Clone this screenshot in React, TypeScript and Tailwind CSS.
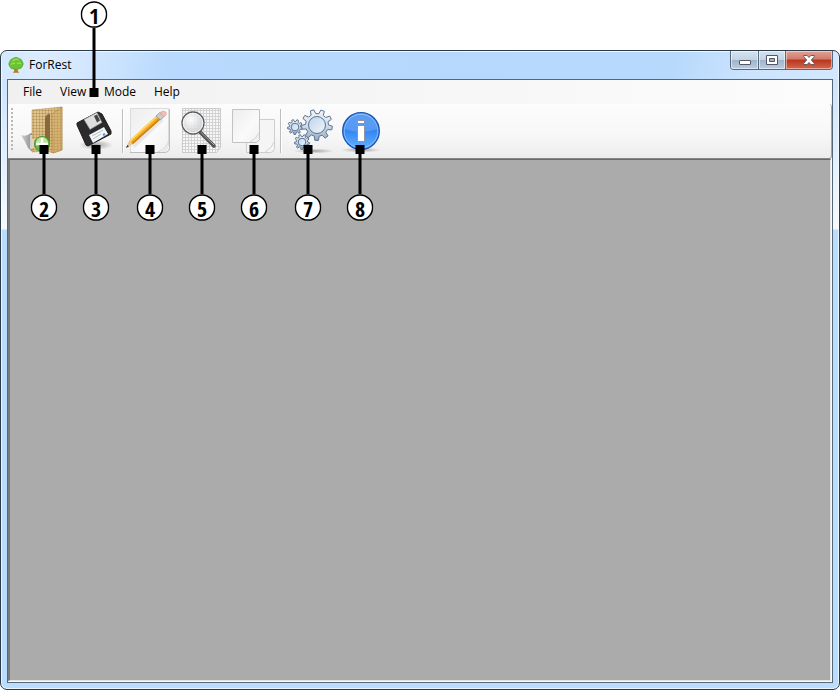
import type { ReactNode } from "react";

function Marker({ n, up = false }: { n: number; up?: boolean }) {
  return (
    <span
      className={
        "pointer-events-none absolute left-1/2 z-10 flex -translate-x-1/2 items-center " +
        (up ? "bottom-[7px] flex-col-reverse" : "top-[41px] flex-col")
      }
    >
      <span className="size-[9px] bg-black" />
      <span className={"w-[3px] bg-black " + (up ? "h-[60px]" : "h-[40px]")} />
      <span className="relative flex size-[27px] items-center justify-center font-['Open_Sans_Condensed','Roboto_Condensed','Liberation_Sans',sans-serif] text-[22px] leading-[22px] font-bold text-black">
        <svg viewBox="0 0 27 27" className="absolute inset-0 size-[27px]" aria-hidden="true">
          <circle cx="13.500" cy="13.500" r="12.600" fill="#fff" stroke="#000" strokeWidth="1.500" />
        </svg>
        <span className="relative">{n}</span>
      </span>
    </span>
  );
}

function Tool({ label, n, children }: { label: string; n: number; children: ReactNode }) {
  return (
    <button type="button" aria-label={label} className="relative h-[52px] w-[52px] shrink-0">
      <svg viewBox="0 0 52 52" className="block size-[52px]" aria-hidden="true">
        {children}
      </svg>
      <Marker n={n} />
    </button>
  );
}

function Separator() {
  return <span className="mt-[5px] h-[44px] w-[2px] shrink-0 border-r border-l border-r-white border-l-[#bdbdbd]" />;
}

function Gear({ x, y, r, teeth, hole }: { x: number; y: number; r: number; teeth: number; hole: number }) {
  const points: string[] = [];
  for (let i = 0; i < teeth; i++) {
    const step = (Math.PI * 2) / teeth;
    const a = i * step + 0.2;
    const parts: [number, number][] = [[-0.3, 0.74], [-0.17, 1], [0.17, 1], [0.3, 0.74]];
    for (const [d, k] of parts) {
      points.push(`${(x + Math.cos(a + d * step) * r * k).toFixed(2)},${(y + Math.sin(a + d * step) * r * k).toFixed(2)}`);
    }
  }
  return (
    <g stroke="#5b7592" strokeLinejoin="round">
      <polygon points={points.join(" ")} fill="url(#gear)" />
      <circle cx={x} cy={y} r={hole} fill="url(#gearHole)" />
    </g>
  );
}

function Defs() {
  return (
    <svg className="absolute size-0" aria-hidden="true">
      <defs>
        <linearGradient id="gear" x1="0" y1="0" x2="0" y2="1">
          <stop offset="0" stopColor="#f2f6fa" />
          <stop offset=".5" stopColor="#d3deea" />
          <stop offset="1" stopColor="#93aac3" />
        </linearGradient>
        <linearGradient id="gearHole" x1="0" y1="0" x2="1" y2="1">
          <stop offset="0" stopColor="#bfd4ea" />
          <stop offset="1" stopColor="#eef5fc" />
        </linearGradient>
        <radialGradient id="shade">
          <stop offset="0" stopColor="#555" stopOpacity=".5" />
          <stop offset="1" stopColor="#555" stopOpacity="0" />
        </radialGradient>
        <linearGradient id="info" x1="0" y1="0" x2="0" y2="1">
          <stop offset="0" stopColor="#3d8bf0" />
          <stop offset=".5" stopColor="#3586f3" />
          <stop offset="1" stopColor="#63b2ff" />
        </linearGradient>
        <linearGradient id="paper" x1="0" y1="0" x2="1" y2="1">
          <stop offset="0" stopColor="#ededed" />
          <stop offset=".6" stopColor="#fafafa" />
          <stop offset="1" stopColor="#f0f0f0" />
        </linearGradient>
        <linearGradient id="wood" x1="0" y1="0" x2="1" y2="1">
          <stop offset="0" stopColor="#e2c997" />
          <stop offset="1" stopColor="#d6b577" />
        </linearGradient>
        <linearGradient id="castShade" x1="0" y1="0" x2="1" y2="0">
          <stop offset="0" stopColor="#d0d0d0" />
          <stop offset="1" stopColor="#7d7d7d" />
        </linearGradient>
        <radialGradient id="lens" cx=".4" cy=".35">
          <stop offset="0" stopColor="#fff" />
          <stop offset="1" stopColor="#d6d9db" />
        </radialGradient>
        <pattern id="weave" width="3" height="3" patternUnits="userSpaceOnUse">
          <path d="M0 .5H3M.5 0V3" stroke="#a27d3e" strokeOpacity=".4" />
        </pattern>
        <pattern id="mesh" width="3" height="3" patternUnits="userSpaceOnUse">
          <path d="M0 .5H3M.5 0V3" stroke="#d2d2d2" />
        </pattern>
      </defs>
    </svg>
  );
}

function FolderIcon() {
  return (
    <>
      <path d="M3 31q5 2 10-2l4 2v17q-6-1-8-6t-6-11z" fill="url(#castShade)" />
      <path d="M14 6l30-3v43l-9 3-6-2-15 1z" fill="url(#wood)" />
      <path d="M14 6l30-3v43l-9 3-6-2-15 1z" fill="url(#weave)" stroke="#b08a4a" strokeWidth=".5" />
      <path d="M27 14q1-4 5-4v31l-5 3z" fill="#86693c" />
      <path d="M34 10l10-7v43l-9 3z" fill="#cfa863" fillOpacity=".45" stroke="#b28b48" strokeWidth=".6" />
      <path d="M13 31v14M15 35v9" stroke="#e4e4ee" strokeWidth="1.500" />
      <circle cx="24" cy="40" r="7.500" fill="#69b944" stroke="#459a2c" />
      <path d="M18 39a6 6 0 0 1 12 0q-6 3-12 0z" fill="#b9e59d" />
      <path d="M24 34v10M18 40h12" stroke="#fff" strokeWidth="2.500" />
    </>
  );
}

function DiskIcon() {
  return (
    <>
      <ellipse cx="26" cy="41" rx="17" ry="5" fill="url(#shade)" />
      <path d="M7 19L28 8l4 2 9 17v3L18 42l-2-1L7 21z" fill="#2b2b2b" stroke="#1d1d1d" />
      <path d="M14 15.500l13-7 5 10-12 7z" fill="#dedede" stroke="#8b8b8b" strokeWidth=".6" />
      <path d="M24 12l3-1.500 3 6-3 2z" fill="#444" />
      <path d="M19 31l15-8 4 7-15 9z" fill="#f2f5f9" />
      <path d="M22 32l11-6M23 35l8-5" stroke="#a6adb5" strokeWidth=".8" />
      <path d="M33 31l2-1" stroke="#4e91dd" strokeWidth="2" />
    </>
  );
}

function PencilIcon() {
  return (
    <>
      <path d="M6.500 4.500h38v37l-6 7h-32z" fill="url(#paper)" stroke="#dcdcdc" />
      <path d="M45.500 5v40q-1 3-4 3.500H6" fill="none" stroke="#bdbdbd" />
      <path d="M34 48q9-4 11-12" fill="none" stroke="#d6d6d6" />
      <path d="M9 42L38 15" stroke="#777" strokeOpacity=".12" strokeWidth="5" />
      <path d="M2 44l3-7 4 3z" fill="#e8c596" />
      <path d="M2 44l1.300-3 1.700 1.500z" fill="#333" />
      <path d="M5 37L33 11l4 4L9 40z" fill="#f7ab24" />
      <path d="M5 37L33 11l1.200 1.200L6.200 38z" fill="#ffd868" />
      <path d="M7.800 39L35.800 13.800 37 15 9 40z" fill="#d08112" />
      <path d="M32 12l4-3.500 4 4-3.500 3.500z" fill="#c8ccd0" stroke="#8b9096" strokeWidth=".7" />
      <path d="M36 8.500q3-2 5-1t1 3.500l-2.500 2z" fill="#f5bcb0" stroke="#d69a8f" strokeWidth=".6" />
    </>
  );
}

function SearchIcon() {
  return (
    <>
      <path d="M6.500 4.500h38v39l-4 5h-34z" fill="#f7f7f7" />
      <path d="M6.500 4.500h38v39l-4 5h-34z" fill="url(#mesh)" stroke="#cacaca" />
      <path d="M24 28l14 14" stroke="#505050" strokeWidth="3.500" strokeLinecap="round" />
      <path d="M25 28.500l13 12.500" stroke="#a5a5a5" strokeWidth="1" strokeLinecap="round" />
      <circle cx="17" cy="19" r="11" fill="url(#lens)" fillOpacity=".9" stroke="#5d5d5d" strokeWidth="1.300" />
      <circle cx="17" cy="19" r="9.800" fill="none" stroke="#fff" strokeWidth=".7" />
    </>
  );
}

function PagesIcon() {
  return (
    <>
      <path d="M18.500 15.500h28v29q-1 4-4 4h-24z" fill="#f5f5f5" stroke="#cdcdcd" />
      <path d="M37 48q7-4 9-10" fill="none" stroke="#d2d2d2" />
      <path d="M4.500 5.500h27v30l-3 3h-24z" fill="url(#paper)" stroke="#c2c2c2" />
      <path d="M22 38q7-4 9-9" fill="none" stroke="#d2d2d2" />
    </>
  );
}

function GearsIcon() {
  return (
    <>
      <ellipse cx="32" cy="47" rx="20" ry="2.500" fill="url(#shade)" />
      <Gear x={13} y={23} r={7.5} teeth={9} hole={3.8} />
      <Gear x={20} y={38} r={7.5} teeth={9} hole={3.8} />
      <Gear x={35} y={21} r={15.5} teeth={9} hole={8.5} />
    </>
  );
}

function InfoIcon() {
  return (
    <>
      <ellipse cx="27" cy="46" rx="20" ry="2.500" fill="url(#shade)" />
      <circle cx="27" cy="27" r="18.300" fill="url(#info)" stroke="#1a55b4" strokeWidth="1.300" />
      <circle cx="27" cy="27" r="16.800" fill="none" stroke="#8fc4ff" strokeWidth=".8" />
      <path d="M11 25a16 16 0 0 1 32 0q-16 6-32 0z" fill="#fff" fillOpacity=".16" />
      <path d="M23.500 16.500h7v3h-7zM23.500 21.500h7v16h-7z" fill="#fff" stroke="#8a8f96" strokeWidth=".9" />
    </>
  );
}

function TreeIcon() {
  return (
    <svg viewBox="0 0 16 16" className="size-4" aria-hidden="true">
      <path d="M6.500 10h3l.3 4 1.500 1.700h-6.600L6.200 14z" fill="#b9782f" />
      <path d="M5 1.500q3-2.500 6 0 3 .5 3.500 3.500 1.500 2 0 4-1 3-4 3-2.500 1-5 0-3 0-4-3-1.500-2 0-4Q2 2 5 1.500z" fill="#6cc235" stroke="#48a023" strokeWidth=".6" />
      <path d="M4.500 4q3-3 6-1M3 7.500q2-2 4-1M9 7q2-2 4 0" fill="none" stroke="#93dc55" strokeWidth="1.500" />
    </svg>
  );
}

const captionButton = "flex h-[18px] items-center justify-center border-r border-[#56687d] shadow-[inset_0_0_0_1px_rgba(255,255,255,0.55)]";

export default function App() {
  return (
    <div className="flex min-h-screen flex-col bg-white pt-[50px] font-['Open_Sans','Noto_Sans',sans-serif] text-xs text-black">
      <Defs />
      <div className="flex flex-1 flex-col rounded-[7px] border border-[#2d3b49] bg-[#b9dcff] bg-[linear-gradient(to_bottom,#c5e1fe_0px,#d5e9fe_60px,#f5faff_178px,#b9dcff_179px)] px-[6px] pb-[6px] shadow-[inset_0_0_0_1px_#ffffffb0]">
        <header className="-mx-[5px] mt-px flex h-[27px] items-start rounded-t-[5px] bg-[linear-gradient(100deg,#d3e8fe_0%,#dcecff_5%,#cfe5fe_12%,#b9dafd_20%,#b5d8fc_50%,#b7d9fc_80%,#cde4fe_90%,#d3e8fe_100%)] pl-[6px]">
          <div className="flex h-[26px] items-center gap-[5px]">
            <TreeIcon />
            <h1 className="text-xs">ForRest</h1>
          </div>
          <div className="-mt-px mr-[5px] ml-auto flex rounded-b-[4px] border border-t-0 border-[#56687d]">
            <button type="button" aria-label="Minimize" className={captionButton + " w-[28px] rounded-bl-[3px] bg-[linear-gradient(#d5e3f1_0%,#c2d3e4_48%,#9fb4ca_50%,#b9cde1_100%)]"}>
              <span className="mt-[4px] h-[5px] w-[12px] rounded-[1px] border border-[#535666] bg-white" />
            </button>
            <button type="button" aria-label="Maximize" className={captionButton + " w-[27px] bg-[linear-gradient(#d5e3f1_0%,#c2d3e4_48%,#9fb4ca_50%,#b9cde1_100%)]"}>
              <svg viewBox="0 0 12 10" className="h-[10px] w-[12px]" aria-hidden="true">
                <path d="M.5.5h11v9H.5z" fill="#fff" stroke="#535666" />
                <path d="M3.500 3.500h5v3h-5z" fill="#9eb4cb" stroke="#535666" />
              </svg>
            </button>
            <button type="button" aria-label="Close" className="flex h-[18px] w-[46px] items-center justify-center rounded-br-[3px] bg-[linear-gradient(#e2a295_0%,#d07a69_45%,#b93520_50%,#d4674a_100%)] shadow-[inset_0_0_0_1px_rgba(255,255,255,0.45)]">
              <svg viewBox="0 0 12 10" className="h-[10px] w-[12px]" aria-hidden="true">
                <path d="M.7.500h3.500L6 2.500 7.800.5h3.500v1L8.300 5l3 3.500v1H7.800L6 7.500l-1.800 2H.7v-1l3-3.500-3-3.500z" fill="#fff" stroke="#535666" strokeWidth=".9" />
              </svg>
            </button>
          </div>
        </header>

        <main className="flex flex-1 flex-col border border-[#566878] bg-[#fbfbfb]">
          <nav aria-label="Main menu" className="flex h-[24px] items-center bg-[linear-gradient(to_right,#f0f0f0,#fcfcfc)] pl-[15px]">
            <button type="button" className="w-[37px] text-left">File</button>
            <button type="button" className="w-[29px] text-left">View</button>
            <span className="relative mr-[5px] w-[10px] self-stretch">
              <Marker n={1} up />
            </span>
            <button type="button" className="w-[50px] text-left">Mode</button>
            <button type="button" className="text-left">Help</button>
          </nav>
          <div className="flex h-[55px] rounded-r-[3px] border-r border-b border-r-[#a7a7a7] border-b-[#868686] bg-[linear-gradient(#fcfcfc,#f7f7f7_60%,#ececec)] pl-[3px]">
            <span className="mt-[4px] mr-[5px] h-[44px] w-[2px] bg-[repeating-linear-gradient(#b8b8b8_0px_2px,transparent_2px_4px)]" />
            <Tool label="Open" n={2}><FolderIcon /></Tool>
            <Tool label="Save" n={3}><DiskIcon /></Tool>
            <Separator />
            <Tool label="Edit" n={4}><PencilIcon /></Tool>
            <Tool label="Find" n={5}><SearchIcon /></Tool>
            <Tool label="Copy" n={6}><PagesIcon /></Tool>
            <Separator />
            <Tool label="Settings" n={7}><GearsIcon /></Tool>
            <Tool label="About" n={8}><InfoIcon /></Tool>
          </div>
          <div className="mr-px mb-px flex-1 border-t border-r border-b border-l-2 border-t-[#696969] border-r-[#e3e3e3] border-b-[#e3e3e3] border-l-[#7a7a7a] bg-[#ababab]" />
        </main>
      </div>
    </div>
  );
}
